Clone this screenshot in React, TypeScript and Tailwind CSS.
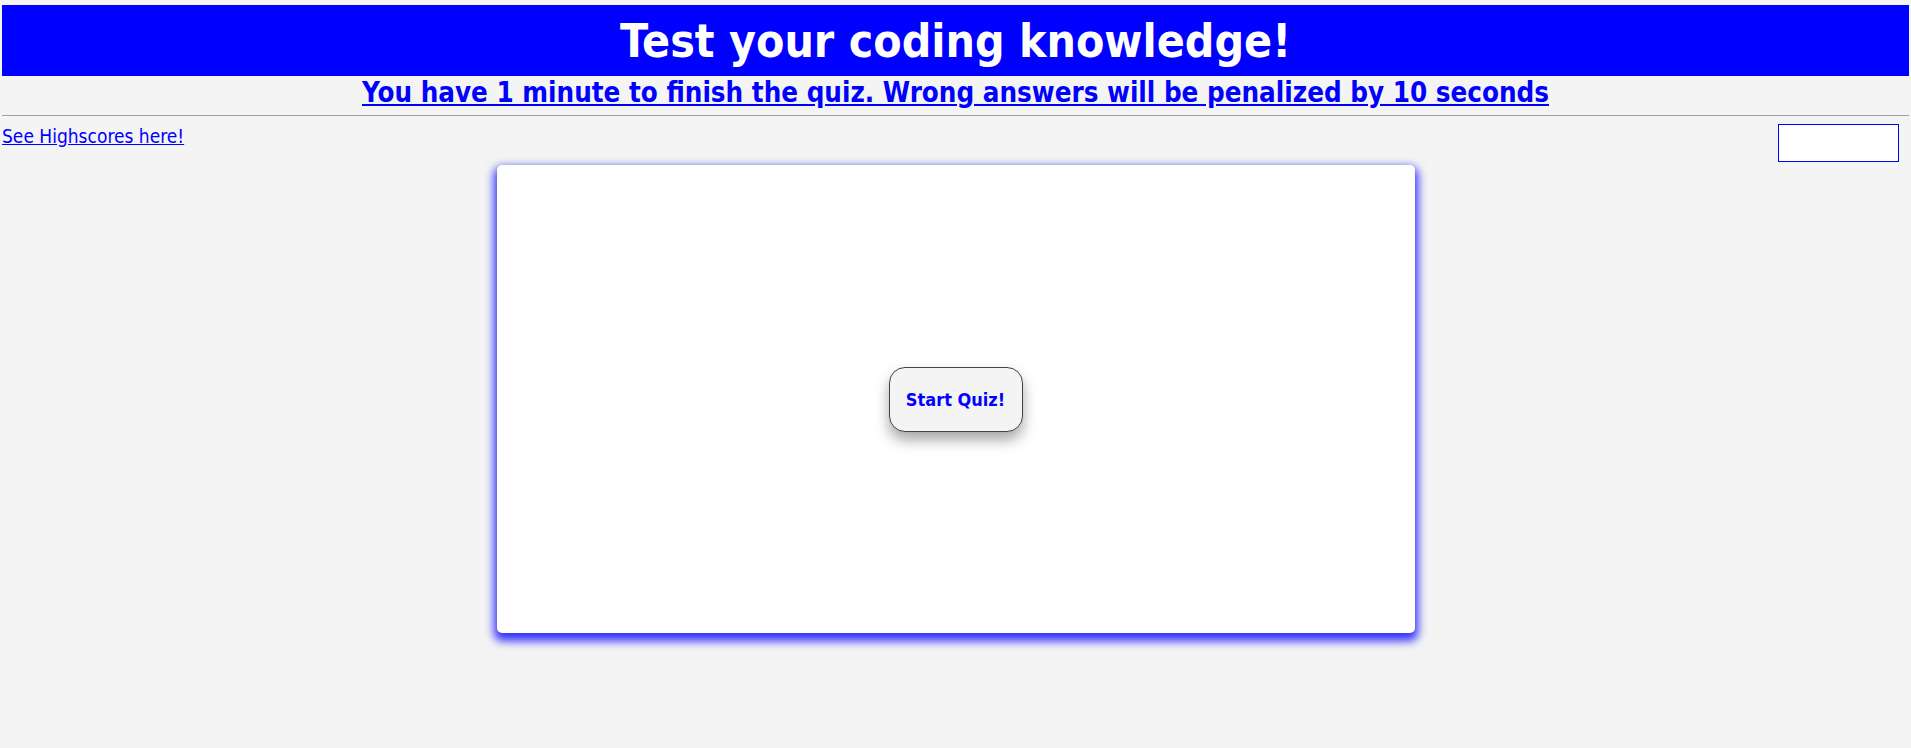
import {useState} from "react";

const font = "font-['DejaVu_Sans_Condensed','DejaVu_Sans',sans-serif]";

function Header() {
    return (
        <header className="px-[2px] pt-[5px]">
            <div className="h-[71px] bg-[#0000ff] flex items-center justify-center">
                <h1 className="text-white font-bold text-[46px] leading-none">Test your coding knowledge!</h1>
            </div>
            <div className="h-[39px] flex justify-center pt-[1px]">
                <a href="#" className="text-[#0000ff] font-bold text-[27.5px] leading-[31px] underline">
                    You have 1 minute to finish the quiz. Wrong answers will be penalized by 10 seconds
                </a>
            </div>
            <hr className="border-0 border-t border-[#a0a0a0]"/>
        </header>
    )
}

function App() {
    const [started, setStarted] = useState(false);

    return (
        <div className={"min-h-screen bg-[#f4f4f4] " + font}>
            <Header/>
            <div className="flex justify-between items-start pl-[2px] pr-[12px] pt-[8px]">
                <a href="#" className="text-[#0000ff] underline text-[19px] leading-[24px]">See Highscores here!</a>
                <div className="w-[121px] h-[38px] bg-white border border-[#0000ff]">
                    {started && <span className="text-[#0000ff]">60</span>}
                </div>
            </div>
            <div className="flex justify-center mt-[3px]">
                <div className="w-[918px] h-[468px] bg-white rounded-[5px] shadow-[0_5px_10px_3px_rgba(0,0,255,0.8)] flex items-center justify-center">
                    <button
                        onClick={() => setStarted(true)}
                        className="w-[134px] h-[65px] rounded-[16px] border border-[#444] bg-[#f4f4f4] text-[#0000ff] font-bold text-[18px] shadow-[0_8px_14px_0_rgba(0,0,0,0.35)] cursor-pointer"
                    >
                        Start Quiz!
                    </button>
                </div>
            </div>
        </div>
    )
}

export default App;
